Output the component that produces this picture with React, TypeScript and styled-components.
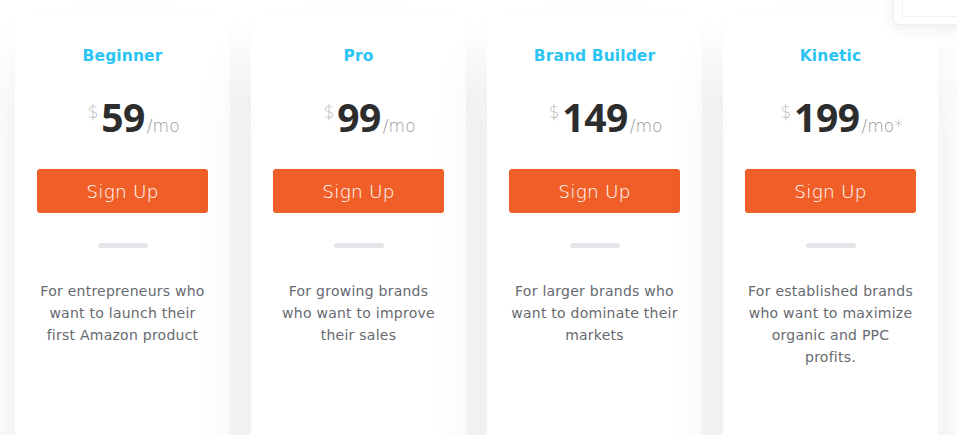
import React from 'react'
import styled, { createGlobalStyle } from 'styled-components'

const Global = createGlobalStyle`
  html, body {
    margin: 0;
    padding: 0;
    background: #fff;
    overflow: hidden;
  }
  * { box-sizing: border-box; }
`

const Page = styled.div`
  position: relative;
  width: 957px;
  height: 435px;
  overflow: hidden;
  background: #fff;
`

const Plans = styled.div`
  display: grid;
  grid-template-columns: repeat(4, 215px);
  gap: 21px;
  padding: 15px 0 0 15px;
`

const Card = styled.div`
  display: flex;
  flex-direction: column;
  align-items: center;
  height: 480px;
  padding: 31px 22px 0;
  background: #fff;
  border-radius: 6px;
  box-shadow: 0 40px 60px -10px rgba(40, 50, 70, 0.13);
`

const Title = styled.h3`
  margin: 0;
  font-family: "DejaVu Sans", sans-serif;
  font-weight: 700;
  font-size: 15.5px;
  line-height: 20px;
  letter-spacing: 0.1px;
  color: #2bc4f4;
`

const Price = styled.div`
  display: flex;
  align-items: baseline;
  margin: 27px 0 0 22px;
  height: 48px;
  font-family: "DejaVu Sans", sans-serif;
`

const Currency = styled.span`
  align-self: flex-start;
  margin-top: 9px;
  margin-right: 3px;
  font-size: 17px;
  font-weight: 300;
  color: #bdbdbd;
`

const Amount = styled.span`
  font-family: "Open Sans", sans-serif;
  font-size: 39px;
  font-weight: 700;
  line-height: 48px;
  letter-spacing: -0.5px;
  color: #2d2d2d;
`

const Per = styled.span`
  margin-left: 2px;
  font-size: 17px;
  font-weight: 300;
  color: #9a9a9a;
`

const SignUp = styled.button`
  width: 100%;
  height: 44px;
  margin-top: 28px;
  border: 0;
  border-radius: 3px;
  background: #f15f28;
  color: #fff;
  font-family: "DejaVu Sans", sans-serif;
  font-size: 18.5px;
  font-weight: 300;
  letter-spacing: 0.2px;
  cursor: pointer;
`

const Divider = styled.div`
  width: 50px;
  height: 5px;
  margin-top: 30px;
  border-radius: 3px;
  background: #e4e5e8;
`

const Description = styled.p`
  margin: 32px 0 0;
  padding: 0 2px;
  font-family: "DejaVu Sans", sans-serif;
  font-size: 14px;
  line-height: 22px;
  letter-spacing: 0.25px;
  text-align: center;
  color: #666a70;
`

const Popover = styled.div`
  position: absolute;
  top: -14px;
  left: 893px;
  width: 90px;
  height: 39px;
  padding: 8px;
  background: #fff;
  border: 1px solid #eceef1;
  border-radius: 5px;
  box-shadow: 0 4px 14px rgba(40, 50, 70, 0.08);
`

const PopoverField = styled.div`
  height: 22px;
  border: 1px solid #eef0f2;
`

const plans = [
  { name: 'Beginner', price: '59', per: '/mo', text: 'For entrepreneurs who want to launch their first Amazon product' },
  { name: 'Pro', price: '99', per: '/mo', text: 'For growing brands who want to improve their sales' },
  { name: 'Brand Builder', price: '149', per: '/mo', text: 'For larger brands who want to dominate their markets' },
  { name: 'Kinetic', price: '199', per: '/mo*', text: 'For established brands who want to maximize organic and PPC profits.' },
]

export default function App() {
  return (
    <Page>
      <Global />
      <Plans>
        {plans.map((p) => (
          <Card key={p.name}>
            <Title>{p.name}</Title>
            <Price>
              <Currency>$</Currency>
              <Amount>{p.price}</Amount>
              <Per>{p.per}</Per>
            </Price>
            <SignUp>Sign Up</SignUp>
            <Divider />
            <Description>{p.text}</Description>
          </Card>
        ))}
      </Plans>
      <Popover>
        <PopoverField />
      </Popover>
    </Page>
  )
}
